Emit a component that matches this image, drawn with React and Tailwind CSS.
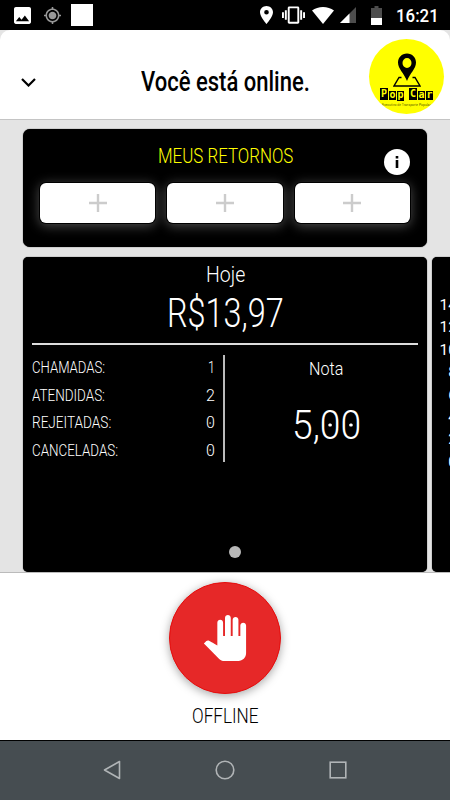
import React, { useLayoutEffect, useRef, useState } from 'react';
import { MdPanTool } from 'react-icons/md';

// Squeezes a line of text to a fixed width
const Fit = ({ width, className = '', children }) => {
  const ref = useRef(null);
  const [scale, setScale] = useState(1);

  useLayoutEffect(() => {
    setScale(width / ref.current.offsetWidth);
  }, [width]);

  return (
    <div className={`whitespace-nowrap ${className}`} style={{ width }}>
      <span ref={ref} className="inline-block origin-left" style={{ transform: `scaleX(${scale})` }}>
        {children}
      </span>
    </div>
  );
};

// Zero with a dot in its middle
const Zero = () => (
  <span className="relative inline-block">
    0
    <span className="absolute left-1/2 top-1/2 h-[0.075em] w-[0.1em] -translate-x-1/2 -translate-y-1/2 rounded-full bg-white" />
  </span>
);

const withZeros = (value) => value.split('').map((c, i) => (c === '0' ? <Zero key={i} /> : c));

const stats = [
  { label: 'CHAMADAS:', width: 73, value: '1', valueWidth: 7 },
  { label: 'ATENDIDAS:', width: 73, value: '2', valueWidth: 9 },
  { label: 'REJEITADAS:', width: 79, value: '0', valueWidth: 9 },
  { label: 'CANCELADAS:', width: 86, value: '0', valueWidth: 9 },
];

const chartLabels = ['14', '12', '10', '8', '6', '4', '2', '0'];

const StatusBar = () => (
  <div className="flex h-[30px] items-center bg-black pl-[14px] pr-[11px] text-white">
    <svg className="h-[17px] w-[17px]" viewBox="3 3 18 18" fill="currentColor">
      <path d="M21 19V5c0-1.100-.9-2-2-2H5c-1.100 0-2 .9-2 2v14c0 1.100.9 2 2 2h14c1.100 0 2-.9 2-2zM8.500 13.500l2.500 3.010L14.500 12l4.500 6H5l3.500-4.500z" />
    </svg>
    <svg className="ml-[13px] h-[17px] w-[17px] text-[#999]" viewBox="1 1 22 22" fill="currentColor">
      <path d="M12 7c-2.760 0-5 2.240-5 5s2.240 5 5 5 5-2.240 5-5-2.240-5-5-5zm8.940 4c-.46-4.170-3.770-7.480-7.940-7.940V1h-2v2.060C6.830 3.520 3.520 6.830 3.060 11H1v2h2.060c.46 4.170 3.770 7.480 7.940 7.940V23h2v-2.060c4.170-.46 7.480-3.770 7.940-7.940H23v-2h-2.060zM12 19c-3.870 0-7-3.130-7-7s3.130-7 7-7 7 3.130 7 7-3.130 7-7 7z" />
    </svg>
    <div className="ml-[10px] h-[22px] w-[22px] bg-white" />

    <svg className="ml-auto h-[18px] w-[13px]" viewBox="5 2 14 20" preserveAspectRatio="none" fill="currentColor">
      <path d="M12 2C8.130 2 5 5.130 5 9c0 5.250 7 13 7 13s7-7.750 7-13c0-3.870-3.130-7-7-7zm0 9.500a2.500 2.500 0 1 1 0-5 2.500 2.500 0 0 1 0 5z" />
    </svg>
    <svg className="ml-[9px] h-[18px] w-[23px]" viewBox="0 3 24 18" fill="currentColor">
      <path d="M0 15h2V9H0v6zm3 2h2V7H3v10zm19-8v6h2V9h-2zm-3 8h2V7h-2v10zM16.500 3h-9C6.670 3 6 3.670 6 4.500v15c0 .83.67 1.500 1.500 1.500h9c.83 0 1.500-.67 1.500-1.500v-15c0-.83-.67-1.500-1.500-1.500zM16 19H8V5h8v14z" />
    </svg>
    <svg className="ml-[7px] h-[17px] w-[22px]" viewBox="0 0 22 17" fill="currentColor">
      <path d="M11 17L0 3.500C3 1.200 7 0 11 0s8 1.200 11 3.500z" />
    </svg>
    <svg className="ml-[6px] h-[16px] w-[16px]" viewBox="0 0 16 16">
      <path d="M0 16L16 0v16z" fill="#4d4d4d" />
      <path d="M0 16L9.500 6.500V16z" fill="#fff" />
    </svg>
    <svg className="ml-[15px] h-[19px] w-[11px]" viewBox="0 0 11 19">
      <path d="M3.500 0h4v2H11v17H0V2h3.500z" fill="#4d4d4d" />
      <path d="M0 12h11v7H0z" fill="#fff" />
    </svg>
    <Fit width={43} className="ml-[14px] text-[18px] leading-[31px] font-medium">16:21</Fit>
  </div>
);

const Logo = () => (
  <div className="mt-[4px] flex h-[75px] w-[75px] flex-col items-center overflow-hidden rounded-full bg-[#ff0] pt-[14px]">
    <svg className="h-[34px] w-[28px]" viewBox="0 0 28 34">
      <path d="M8.500 24.500H6L1 33h26l-5-8.500h-2.500" fill="none" stroke="#000" strokeWidth="1.400" />
      <path
        d="M14 .5C8.700 .5 5 4.500 5 9.500 5 16 11 20 14 28c3-8 9-12 9-18.500 0-5-3.700-9-9-9zM14 15a4.500 5 0 1 1 0-10 4.500 5 0 0 1 0 10z"
        fillRule="evenodd"
      />
    </svg>
    <div className="mt-px flex h-[13px] items-start gap-px font-['DejaVu_Sans_Mono',monospace] text-[10px] font-bold text-[#ff0]">
      <span className="h-[12px] w-[8px] bg-black text-center leading-[12px]">P</span>
      <span className="mt-[3px] h-[9px] w-[7px] bg-black text-center leading-[7px]">o</span>
      <span className="mt-[3px] h-[10px] w-[7px] bg-black text-center leading-[7px]">p</span>
      <span className="ml-[4px] h-[12px] w-[8px] bg-black text-center leading-[12px]">C</span>
      <span className="mt-[3px] h-[9px] w-[7px] bg-black text-center leading-[7px]">a</span>
      <span className="mt-[3px] h-[9px] w-[7px] bg-black text-center leading-[7px]">r</span>
    </div>
    <Fit width={49} className="mt-[2px] text-[4px] leading-[4px] text-black/70">Executivo de Transporte Popular</Fit>
  </div>
);

const Header = () => (
  <div className="bg-[#e4e4e4]">
    <div className="flex h-[90px] items-center justify-between rounded-t-[10px] border-b border-[#c4c4c4] bg-white pl-[21px] pr-[6px]">
      <svg className="mt-[16px] h-[9px] w-[15px]" viewBox="0 0 15 9" fill="none" stroke="#000" strokeWidth="2.200">
        <path d="M1 1l6.500 6.500L14 1" />
      </svg>
      <Fit width={169} className="ml-[45px] mt-[14px] text-[28px] leading-[32px] font-medium text-black">
        Você está online.
      </Fit>
      <Logo />
    </div>
  </div>
);

const Returns = () => (
  <div className="relative mx-[23px] h-[118px] rounded-[7px] bg-black px-[17px] pt-[15px] shadow-[0_0_1px_#000]">
    <Fit width={135} className="mx-auto text-[21px] leading-[24px] font-light text-[#ff0]">
      MEUS RETORNOS
    </Fit>
    <div className="absolute right-[17px] top-[20px] h-[26px] w-[26px] rounded-full bg-white">
      <svg viewBox="0 0 26 26">
        <path d="M11.700 7h2.600v2.400h-2.600zM11.700 11h2.600v8h-2.600z" />
      </svg>
    </div>
    <div className="mt-[15px] grid grid-cols-3 gap-[12px]">
      {[0, 1, 2].map((slot) => (
        <div
          key={slot}
          className="flex h-[40px] items-center justify-center rounded-[6px] bg-white shadow-[0_0_0_1px_#000,0_2px_12px_1px_rgba(255,255,255,0.3)]"
        >
          <svg className="h-[18px] w-[18px]" viewBox="0 0 18 18" stroke="#ccc" strokeWidth="2.400">
            <path d="M9 0v18M0 9h18" />
          </svg>
        </div>
      ))}
    </div>
  </div>
);

const Today = () => (
  <div className="relative h-[315px] w-[404px] shrink-0 rounded-[5px] bg-black px-[9px] pt-[4px] text-white shadow-[0_0_1px_#000]">
    <Fit width={39} className="mx-auto text-[22.500px] leading-[26px] font-light">Hoje</Fit>
    <Fit width={117} className="mx-auto mt-[5px] text-[41px] leading-[42px] font-light">R$13,97</Fit>
    <div className="mt-[9px] h-[1.500px] bg-[#ddd]" />
    <div className="mt-[10.500px] flex">
      <div className="flex h-[107px] w-[193px] flex-col border-r-2 border-[#bbb] pr-[8px]">
        {stats.map((s) => (
          <div key={s.label} className="flex h-[27.600px] shrink-0 justify-between text-[16px] leading-[25px] font-[350]">
            <Fit width={s.width}>{s.label}</Fit>
            <Fit width={s.valueWidth}>{withZeros(s.value)}</Fit>
          </div>
        ))}
      </div>
      <div className="flex flex-1 flex-col items-center pl-[9px] pt-[3px]">
        <Fit width={34} className="text-[18px] leading-[22px] font-light">Nota</Fit>
        <Fit width={69} className="mt-[24px] text-[41px] leading-[42px] font-light">{withZeros('5,00')}</Fit>
      </div>
    </div>
    <div className="absolute bottom-[14px] left-[206px] h-[12px] w-[12px] rounded-full bg-[#b8b8b8]" />
  </div>
);

const Chart = () => (
  <div className="h-[315px] w-[404px] shrink-0 rounded-[5px] bg-black pt-[37px] text-white shadow-[0_0_1px_#000]">
    <div className="w-[25px] text-right text-[15.500px] leading-[22.400px]">
      {chartLabels.map((label) => (
        <div key={label}>{label}</div>
      ))}
    </div>
  </div>
);

const NavBar = () => (
  <div className="flex h-[60px] items-center justify-center gap-[94px] border-t border-black bg-[#464d51] pb-px">
    <svg className="h-[20px] w-[18px]" viewBox="0 0 18 20" fill="none" stroke="#b0b4b6" strokeWidth="1.600">
      <path d="M16.500 1.500v17L1.500 10z" strokeLinejoin="round" />
    </svg>
    <svg className="h-[20px] w-[20px]" viewBox="0 0 20 20" fill="none" stroke="#b0b4b6" strokeWidth="1.600">
      <circle cx="10" cy="10" r="8.800" />
    </svg>
    <svg className="h-[18px] w-[18px]" viewBox="0 0 18 18" fill="none" stroke="#b0b4b6" strokeWidth="1.600">
      <rect x="1.200" y="1.200" width="15.600" height="15.600" />
    </svg>
  </div>
);

export default function App() {
  return (
    <div className="h-[800px] w-[450px] overflow-hidden bg-white font-['Roboto',sans-serif]">
      <StatusBar />
      <Header />
      <div className="h-[452px] overflow-hidden bg-[#e4e4e4] pt-[9px]">
        <Returns />
        <div className="mt-[10px] flex gap-[5px] pl-[23px]">
          <Today />
          <Chart />
        </div>
      </div>
      <div className="flex h-[168px] flex-col items-center border-t border-[#bbb] pt-[9px]">
        <div className="flex h-[112px] w-[112px] items-center justify-center rounded-full border border-[#e60c0c] bg-[#e62828] text-white shadow-[0_2px_10px_rgba(0,0,0,0.35)]">
          <MdPanTool size={46} />
        </div>
        <Fit width={67} className="mt-[10px] text-[20px] leading-[24px] font-light text-black">OFFLINE</Fit>
      </div>
      <NavBar />
    </div>
  );
}
